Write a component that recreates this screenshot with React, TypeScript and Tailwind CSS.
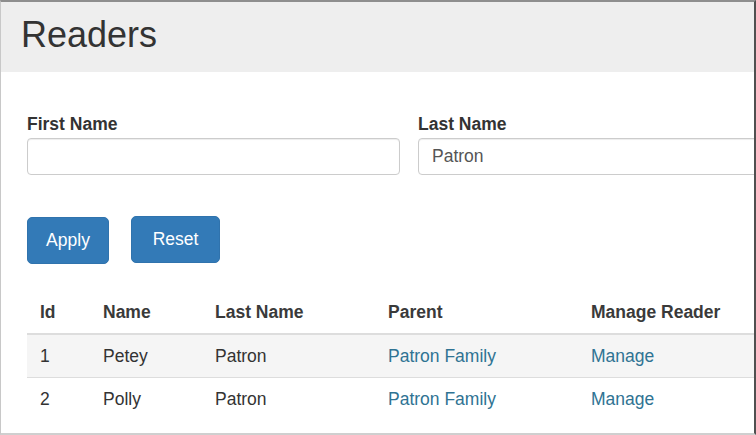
import React from "react";

const rows = [
  { id: 1, name: "Petey", last: "Patron", parent: "Patron Family" },
  { id: 2, name: "Polly", last: "Patron", parent: "Patron Family" },
];

export default function App() {
  return (
    <div
      className="w-[756px] h-[435px] overflow-hidden bg-white border-t-2 border-t-[#8e8e8e] border-l border-l-[#c8c8c8] border-r-2 border-r-[#505050] border-b-2 border-b-[#cfcfcf] text-[#333333]"
      style={{ fontFamily: '"Liberation Sans", Arial, Helvetica, sans-serif' }}
    >
      <div className="h-[70px] bg-[#eeeeee] pl-[20px] pt-[12px]">
        <h1 className="text-[36px] leading-[41px] font-normal text-[#333333]">Readers</h1>
      </div>

      <div className="pl-[26px] pt-[40px] w-[800px]">
        <div className="flex gap-[18px]">
          <div className="w-[373px] shrink-0">
            <label className="block h-[24px] leading-[24px] text-[17.5px] font-bold mb-[2px]">First Name</label>
            <div className="h-[37px] border border-[#cccccc] rounded-[4px] bg-white shadow-[inset_0_1px_1px_rgba(0,0,0,0.075)]" />
          </div>
          <div className="w-[373px] shrink-0">
            <label className="block h-[24px] leading-[24px] text-[17.5px] font-bold mb-[2px]">Last Name</label>
            <div className="h-[37px] border border-[#cccccc] rounded-[4px] bg-white px-[13px] flex items-center text-[17.5px] text-[#555555] shadow-[inset_0_1px_1px_rgba(0,0,0,0.075)]">
              Patron
            </div>
          </div>
        </div>

        <div className="flex items-start gap-[22px] mt-[41px]">
          <button className="mt-[1px] w-[82px] h-[47px] rounded-[5px] bg-[#337ab7] border border-[#3073ad] text-white text-[17.5px] flex items-center justify-center">
            Apply
          </button>
          <button className="w-[89px] h-[47px] rounded-[5px] bg-[#337ab7] border border-[#3073ad] text-white text-[17.5px] flex items-center justify-center">
            Reset
          </button>
        </div>

        <table className="mt-[27px] w-[764px] table-fixed border-separate border-spacing-0 text-[17.5px]">
          <colgroup>
            <col className="w-[63px]" />
            <col className="w-[112px]" />
            <col className="w-[173px]" />
            <col className="w-[203px]" />
            <col />
          </colgroup>
          <thead>
            <tr>
              {["Id", "Name", "Last Name", "Parent", "Manage Reader"].map((h) => (
                <th
                  key={h}
                  className="text-left font-bold pl-[13px] leading-[42px] border-b-2 border-[#dddddd] whitespace-nowrap text-[#3a3a3a]"
                >
                  {h}
                </th>
              ))}
            </tr>
          </thead>
          <tbody>
            {rows.map((r, i) => (
              <tr key={r.id} className={i === 0 ? "bg-[#f5f5f5]" : "bg-white"}>
                <td className={`pl-[13px] leading-[42px] ${i > 0 ? "border-t border-[#dddddd]" : ""}`}>{r.id}</td>
                <td className={`pl-[13px] leading-[42px] ${i > 0 ? "border-t border-[#dddddd]" : ""}`}>{r.name}</td>
                <td className={`pl-[13px] leading-[42px] ${i > 0 ? "border-t border-[#dddddd]" : ""}`}>{r.last}</td>
                <td className={`pl-[13px] leading-[42px] whitespace-nowrap ${i > 0 ? "border-t border-[#dddddd]" : ""}`}>
                  <a className="text-[#2f7393]">{r.parent}</a>
                </td>
                <td className={`pl-[13px] leading-[42px] ${i > 0 ? "border-t border-[#dddddd]" : ""}`}>
                  <a className="text-[#2f7393]">Manage</a>
                </td>
              </tr>
            ))}
          </tbody>
        </table>
      </div>
    </div>
  );
}
